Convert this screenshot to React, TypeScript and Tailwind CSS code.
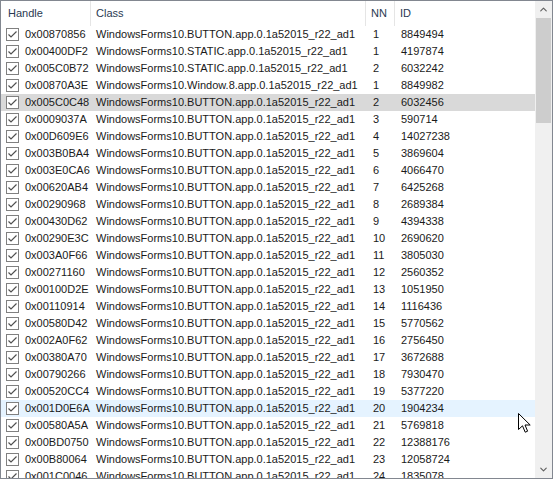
import { ChevronUp, ChevronDown } from "lucide-react";

type Row = { handle: string; cls: string; nn: number };

const B = "WindowsForms10.BUTTON.app.0.1a52015_r22_ad1";
const S = "WindowsForms10.STATIC.app.0.1a52015_r22_ad1";
const W = "WindowsForms10.Window.8.app.0.1a52015_r22_ad1";

const rows: Row[] = [
  { handle: "0x00870856", cls: B, nn: 1 },
  { handle: "0x00400DF2", cls: S, nn: 1 },
  { handle: "0x005C0B72", cls: S, nn: 2 },
  { handle: "0x00870A3E", cls: W, nn: 1 },
  { handle: "0x005C0C48", cls: B, nn: 2 },
  { handle: "0x0009037A", cls: B, nn: 3 },
  { handle: "0x00D609E6", cls: B, nn: 4 },
  { handle: "0x003B0BA4", cls: B, nn: 5 },
  { handle: "0x003E0CA6", cls: B, nn: 6 },
  { handle: "0x00620AB4", cls: B, nn: 7 },
  { handle: "0x00290968", cls: B, nn: 8 },
  { handle: "0x00430D62", cls: B, nn: 9 },
  { handle: "0x00290E3C", cls: B, nn: 10 },
  { handle: "0x003A0F66", cls: B, nn: 11 },
  { handle: "0x00271160", cls: B, nn: 12 },
  { handle: "0x00100D2E", cls: B, nn: 13 },
  { handle: "0x00110914", cls: B, nn: 14 },
  { handle: "0x00580D42", cls: B, nn: 15 },
  { handle: "0x002A0F62", cls: B, nn: 16 },
  { handle: "0x00380A70", cls: B, nn: 17 },
  { handle: "0x00790266", cls: B, nn: 18 },
  { handle: "0x00520CC4", cls: B, nn: 19 },
  { handle: "0x001D0E6A", cls: B, nn: 20 },
  { handle: "0x00580A5A", cls: B, nn: 21 },
  { handle: "0x00BD0750", cls: B, nn: 22 },
  { handle: "0x00B80064", cls: B, nn: 23 },
  { handle: "0x001C0046", cls: B, nn: 24 },
];

const SELECTED = 4;
const HOVER = 22;

function CheckBox() {
  return (
    <svg width="13" height="13" viewBox="0 0 13 13" className="shrink-0">
      <rect x="0.5" y="0.5" width="12" height="12" fill="#fff" stroke="#808080" />
      <path d="M2.5 6.5 L5 9 L10.5 3.5" fill="none" stroke="#505050" strokeWidth="1.2" />
    </svg>
  );
}

function Cursor() {
  return (
    <svg width="14" height="21" viewBox="0 0 14 21" className="absolute left-[517px] top-[412px]">
      <path
        d="M0.5 0.5 L0.5 16.5 L4.5 12.8 L7.2 19.2 L9.6 18.2 L7 12 L12.2 12 Z"
        fill="#fff"
        stroke="#000"
        strokeWidth="1"
      />
    </svg>
  );
}

export default function App() {
  return (
    <div
      className="relative w-[553px] h-[479px] bg-white border border-[#828790] flex overflow-hidden text-[11px] text-[#1a1a1a]"
      style={{ fontFamily: '"Liberation Sans", Arial, sans-serif' }}
    >
      <div className="flex-1 flex flex-col overflow-hidden">
        <div className="flex h-[25px] shrink-0 text-[#2a3a52]">
          <div className="w-[90px] border-r border-[#e5e5e5] pl-[7px] flex items-center">Handle</div>
          <div className="w-[275px] border-r border-[#e5e5e5] pl-[5px] flex items-center">Class</div>
          <div className="w-[29px] border-r border-[#e5e5e5] pl-[5px] flex items-center">NN</div>
          <div className="flex-1 pl-[5px] flex items-center">ID</div>
        </div>
        {rows.map((r, i) => {
          const id = parseInt(r.handle, 16);
          const bg = i === SELECTED ? "bg-[#d9d9d9]" : i === HOVER ? "bg-[#e5f3ff]" : "";
          return (
            <div key={r.handle} className={`flex h-[17px] shrink-0 items-center leading-none whitespace-nowrap ${bg}`}>
              <div className="w-[90px] flex items-center gap-[6px] pl-[5px]">
                <CheckBox />
                <span>{r.handle}</span>
              </div>
              <div className="w-[276px] pl-[5px] overflow-hidden">{r.cls}</div>
              <div className="w-[29px] pl-[6px]">{r.nn}</div>
              <div className="flex-1 pl-[5px]">{id}</div>
            </div>
          );
        })}
      </div>
      <div className="w-[17px] shrink-0 bg-[#f0f0f0] flex flex-col">
        <div className="h-[17px] flex items-center justify-center text-[#606060]">
          <ChevronUp size={11} strokeWidth={2.5} />
        </div>
        <div className="mx-[1px] h-[105px] bg-[#cdcdcd]" />
        <div className="flex-1" />
        <div className="h-[17px] flex items-center justify-center text-[#606060]">
          <ChevronDown size={11} strokeWidth={2.5} />
        </div>
      </div>
      <Cursor />
    </div>
  );
}
